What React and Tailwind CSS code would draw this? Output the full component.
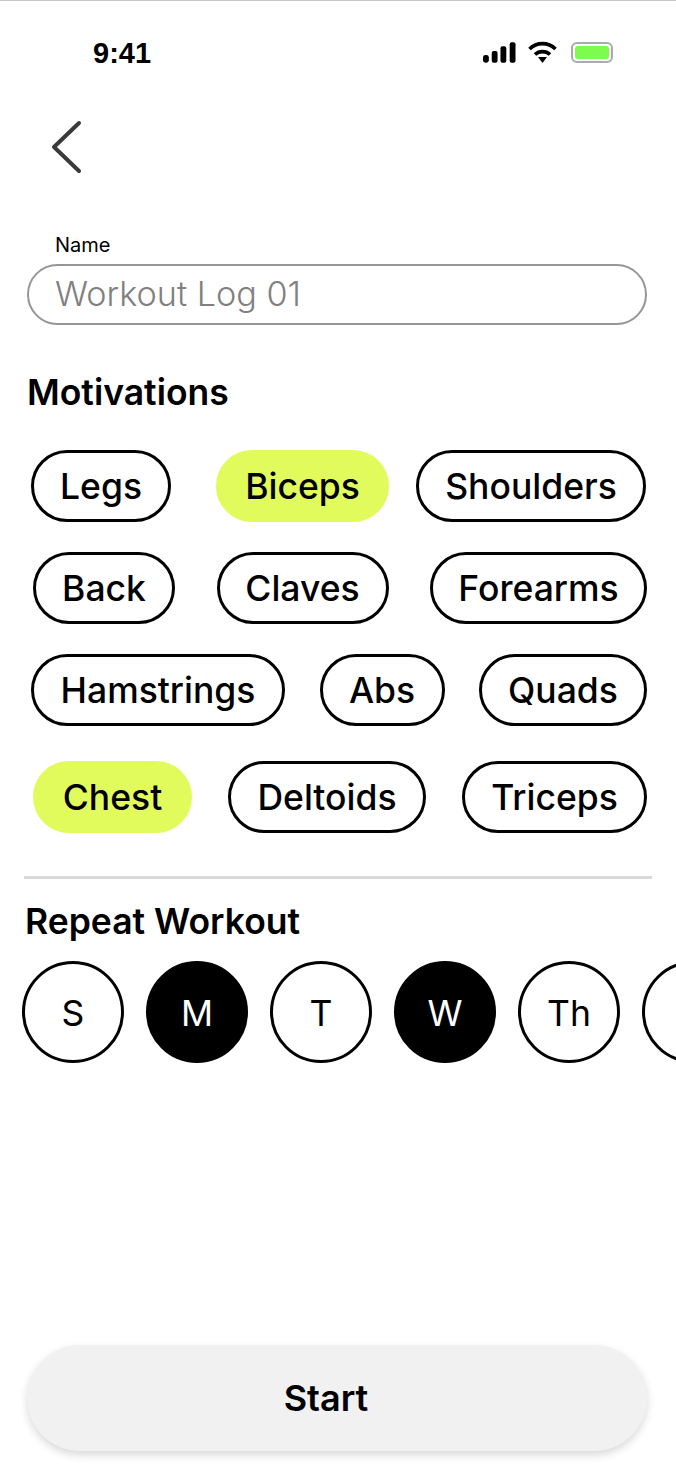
import React from "react";

const font = "font-['Inter',sans-serif]";

const rows = [
  { cls: "pl-[31px] pr-[30px] mt-[36px] h-[73px]", items: [["Legs", 140], ["Biceps", 173, true, "ml-[45px] mr-auto"], ["Shoulders", 230]] },
  { cls: "pl-[33px] pr-[29px] mt-[29px] h-[73px]", items: [["Back", 142], ["Claves", 172], ["Forearms", 217]] },
  { cls: "pl-[31px] pr-[29px] mt-[29px] h-[73px]", items: [["Hamstrings", 254], ["Abs", 125], ["Quads", 168]] },
  { cls: "pl-[33px] pr-[29px] mt-[34px] h-[73px]", items: [["Chest", 159, true], ["Deltoids", 198], ["Triceps", 185]] },
];

// the sixth circle runs off the right edge, its letter is out of view
const days = [
  ["S", false],
  ["M", true],
  ["T", false],
  ["W", true],
  ["Th", false],
  ["", false],
];

function Pill({ label, width, active, extra = "" }) {
  const style = active ? "bg-[#e1fb5c] border-[#e1fb5c]" : "bg-white border-black";
  return (
    <button
      style={{ width }}
      className={`h-[72px] rounded-full border-[3.5px] pt-[2px] text-[35.5px] leading-none font-[450] text-black flex items-center justify-center ${style} ${extra}`}
    >
      {label}
    </button>
  );
}

function StatusIcons() {
  return (
    <div className="flex items-center">
      <svg width="33" height="21" viewBox="0 0 34 21" fill="#000">
        <rect x="0" y="13" width="6" height="8" rx="2.5" />
        <rect x="9" y="9" width="6" height="12" rx="2" />
        <rect x="18" y="4" width="6" height="17" rx="2" />
        <rect x="27.5" y="0" width="6" height="21" rx="2" />
      </svg>
      <svg className="ml-[12px]" width="29" height="22" viewBox="0 0 29 22" fill="none" stroke="#000" strokeWidth="3.6">
        <path d="M1.5 8C8.8 .8 20.2 .8 27.5 8" />
        <path d="M7 13.5C11.2 9.6 17.8 9.6 22 13.5" />
        <path d="M10 16h9l-4.5 6z" fill="#000" stroke="none" />
      </svg>
      <div className="ml-[14px] w-[42px] h-[21px] rounded-[6px] border-2 border-[#ababab] p-[2px]">
        <div className="w-full h-full rounded-[3px] bg-[#7dfb4f]" />
      </div>
    </div>
  );
}

export default function App() {
  return (
    <div className={`w-[676px] h-[1480px] bg-white overflow-hidden flex flex-col border-t border-[#c6c6c6] ${font}`}>
      <div className="h-[64px] pt-[40px] pl-[93px] pr-[63px] flex items-start justify-between">
        <span className="font-['Liberation_Sans',sans-serif] font-bold text-[29px] leading-[24px] text-black">9:41</span>
        <StatusIcons />
      </div>

      <div className="mt-[55px] pl-[50px]">
        <svg width="34" height="56" viewBox="0 0 34 56" fill="none" stroke="#3a3a3a" strokeWidth="4" strokeLinecap="round" strokeLinejoin="round">
          <path d="M29 3L4 27L29 51" />
        </svg>
      </div>

      <label className="mt-[58px] ml-[55px] text-[20px] leading-[22px] text-black">Name</label>
      <div className="mt-[8px] ml-[27px] mr-[29px] h-[61px] rounded-full border-2 border-[#969696] pl-[26px] flex items-center text-[34.2px] leading-none font-light text-[#808080]">
        Workout Log 01
      </div>

      <h2 className="mt-[48px] ml-[27px] text-[35.5px] leading-[40px] font-semibold text-black">Motivations</h2>

      <div className="flex flex-col">
        {rows.map((row, i) => (
          <div key={i} className={`flex items-center justify-between ${row.cls}`}>
            {row.items.map(([label, width, active, extra]) => (
              <Pill key={label} label={label} width={width} active={active} extra={extra} />
            ))}
          </div>
        ))}
      </div>

      <div className="mt-[43px] mx-[24px] h-[3px] bg-[#d9d9d9]" />

      <h2 className="mt-[23px] ml-[25px] text-[35.5px] leading-[40px] font-semibold text-black">Repeat Workout</h2>

      <div className="mt-[19px] pl-[22px] flex gap-[22px]">
        {days.map(([d, on], i) => (
          <div
            key={i}
            className={`w-[102px] h-[102px] shrink-0 rounded-full border-[3.5px] border-black pt-[3px] flex items-center justify-center text-[35.5px] leading-none ${on ? "bg-black text-white" : "bg-white text-black"}`}
          >
            {d}
          </div>
        ))}
      </div>

      <button className="mt-[282px] ml-[27px] mr-[29px] pr-[22px] h-[106px] rounded-[53px] bg-[#f1f1f1] shadow-[0_4px_8px_rgba(0,0,0,0.15)] text-[36px] font-semibold text-black">
        Start
      </button>
    </div>
  );
}
